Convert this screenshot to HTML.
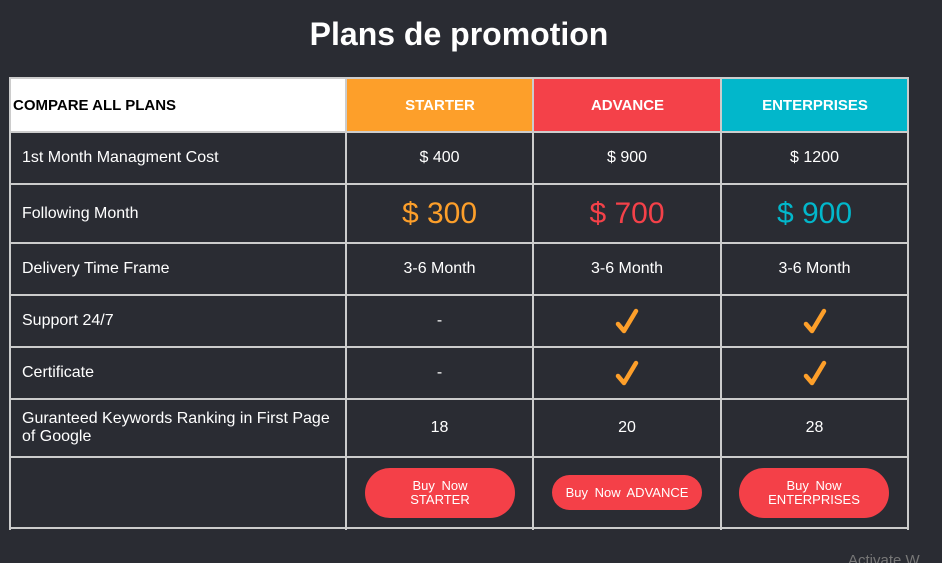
<!DOCTYPE html>
<html><head><meta charset="utf-8"><style>
html,body{margin:0;width:942px;height:563px;overflow:hidden}
body{background:#2a2c33;font-family:"Liberation Sans",sans-serif;color:#fff;position:relative}
h1{position:absolute;top:16px;left:0;width:918px;text-align:center;margin:0;font-size:32px;font-weight:bold}
.h{position:absolute;left:9px;width:900px;height:2px;background:#ccc}
.v{position:absolute;top:77px;width:2px;height:453px;background:#ccc}
.c{position:absolute;display:flex;align-items:center;justify-content:center;text-align:center;font-size:16px}
.l{justify-content:flex-start;padding-left:11px;text-align:left;line-height:18px}
.btn{background:#f44048;color:#fff;border-radius:26px;font-size:13px;line-height:14px;display:flex;align-items:center;justify-content:center;text-align:center;word-spacing:3px}
</style></head><body>
<h1>Plans de promotion</h1>
<div class="c" style="left:11px;top:79px;width:334px;height:52px;background:#fff;color:#000;font-weight:bold;font-size:15px;justify-content:flex-start;padding-left:2px;box-sizing:border-box">COMPARE ALL PLANS</div>
<div class="c" style="left:347px;top:79px;width:186px;height:52px;background:#fd9f2a;font-weight:bold;font-size:15px">STARTER</div>
<div class="c" style="left:534px;top:79px;width:187px;height:52px;background:#f44149;font-weight:bold;font-size:15px">ADVANCE</div>
<div class="c" style="left:722px;top:79px;width:186px;height:52px;background:#02b7cb;font-weight:bold;font-size:15px">ENTERPRISES</div>

<div class="h" style="top:77px"></div><div class="h" style="top:131px"></div><div class="h" style="top:183px"></div><div class="h" style="top:242px"></div><div class="h" style="top:294px"></div><div class="h" style="top:346px"></div><div class="h" style="top:398px"></div><div class="h" style="top:456px"></div><div class="h" style="top:527px"></div>
<div class="v" style="left:9px"></div><div class="v" style="left:345px"></div><div class="v" style="left:532px"></div><div class="v" style="left:720px"></div><div class="v" style="left:907px"></div>

<div class="c l" style="left:11px;top:133px;width:323px;height:50px">1st Month Managment Cost</div>
<div class="c" style="left:347px;top:133px;width:185px;height:50px">$ 400</div>
<div class="c" style="left:534px;top:133px;width:186px;height:50px">$ 900</div>
<div class="c" style="left:722px;top:133px;width:185px;height:50px">$ 1200</div>

<div class="c l" style="left:11px;top:185px;width:323px;height:57px">Following Month</div>
<div class="c" style="left:347px;top:185px;width:185px;height:57px;font-size:30px;color:#fd9f2a">$ 300</div>
<div class="c" style="left:534px;top:185px;width:186px;height:57px;font-size:30px;color:#f44149">$ 700</div>
<div class="c" style="left:722px;top:185px;width:185px;height:57px;font-size:30px;color:#02b7cb">$ 900</div>

<div class="c l" style="left:11px;top:244px;width:323px;height:50px">Delivery Time Frame</div>
<div class="c" style="left:347px;top:244px;width:185px;height:50px">3-6 Month</div>
<div class="c" style="left:534px;top:244px;width:186px;height:50px">3-6 Month</div>
<div class="c" style="left:722px;top:244px;width:185px;height:50px">3-6 Month</div>

<div class="c l" style="left:11px;top:296px;width:323px;height:50px">Support 24/7</div>
<div class="c" style="left:347px;top:296px;width:185px;height:50px">-</div>
<div class="c" style="left:534px;top:296px;width:186px;height:50px"><svg width="26" height="28" viewBox="0 0 26 28"><path d="M4 17 L10 24 L22 4" fill="none" stroke="#fd9f2a" stroke-width="4.5" stroke-linecap="round" stroke-linejoin="round"/></svg></div>
<div class="c" style="left:722px;top:296px;width:185px;height:50px"><svg width="26" height="28" viewBox="0 0 26 28"><path d="M4 17 L10 24 L22 4" fill="none" stroke="#fd9f2a" stroke-width="4.5" stroke-linecap="round" stroke-linejoin="round"/></svg></div>

<div class="c l" style="left:11px;top:348px;width:323px;height:50px">Certificate</div>
<div class="c" style="left:347px;top:348px;width:185px;height:50px">-</div>
<div class="c" style="left:534px;top:348px;width:186px;height:50px"><svg width="26" height="28" viewBox="0 0 26 28"><path d="M4 17 L10 24 L22 4" fill="none" stroke="#fd9f2a" stroke-width="4.5" stroke-linecap="round" stroke-linejoin="round"/></svg></div>
<div class="c" style="left:722px;top:348px;width:185px;height:50px"><svg width="26" height="28" viewBox="0 0 26 28"><path d="M4 17 L10 24 L22 4" fill="none" stroke="#fd9f2a" stroke-width="4.5" stroke-linecap="round" stroke-linejoin="round"/></svg></div>

<div class="c l" style="left:11px;top:400px;width:323px;height:56px">Guranteed Keywords Ranking in First Page of Google</div>
<div class="c" style="left:347px;top:400px;width:185px;height:56px">18</div>
<div class="c" style="left:534px;top:400px;width:186px;height:56px">20</div>
<div class="c" style="left:722px;top:400px;width:185px;height:56px">28</div>

<div class="btn" style="position:absolute;left:365px;top:468px;width:150px;height:50px">Buy Now<br>STARTER</div>
<div class="btn" style="position:absolute;left:552px;top:475px;width:150px;height:35px">Buy Now ADVANCE</div>
<div class="btn" style="position:absolute;left:739px;top:468px;width:150px;height:50px">Buy Now<br>ENTERPRISES</div>

<div style="position:absolute;left:848px;top:552px;color:#777;font-size:15px;line-height:17px">Activate W</div>
</body></html>
